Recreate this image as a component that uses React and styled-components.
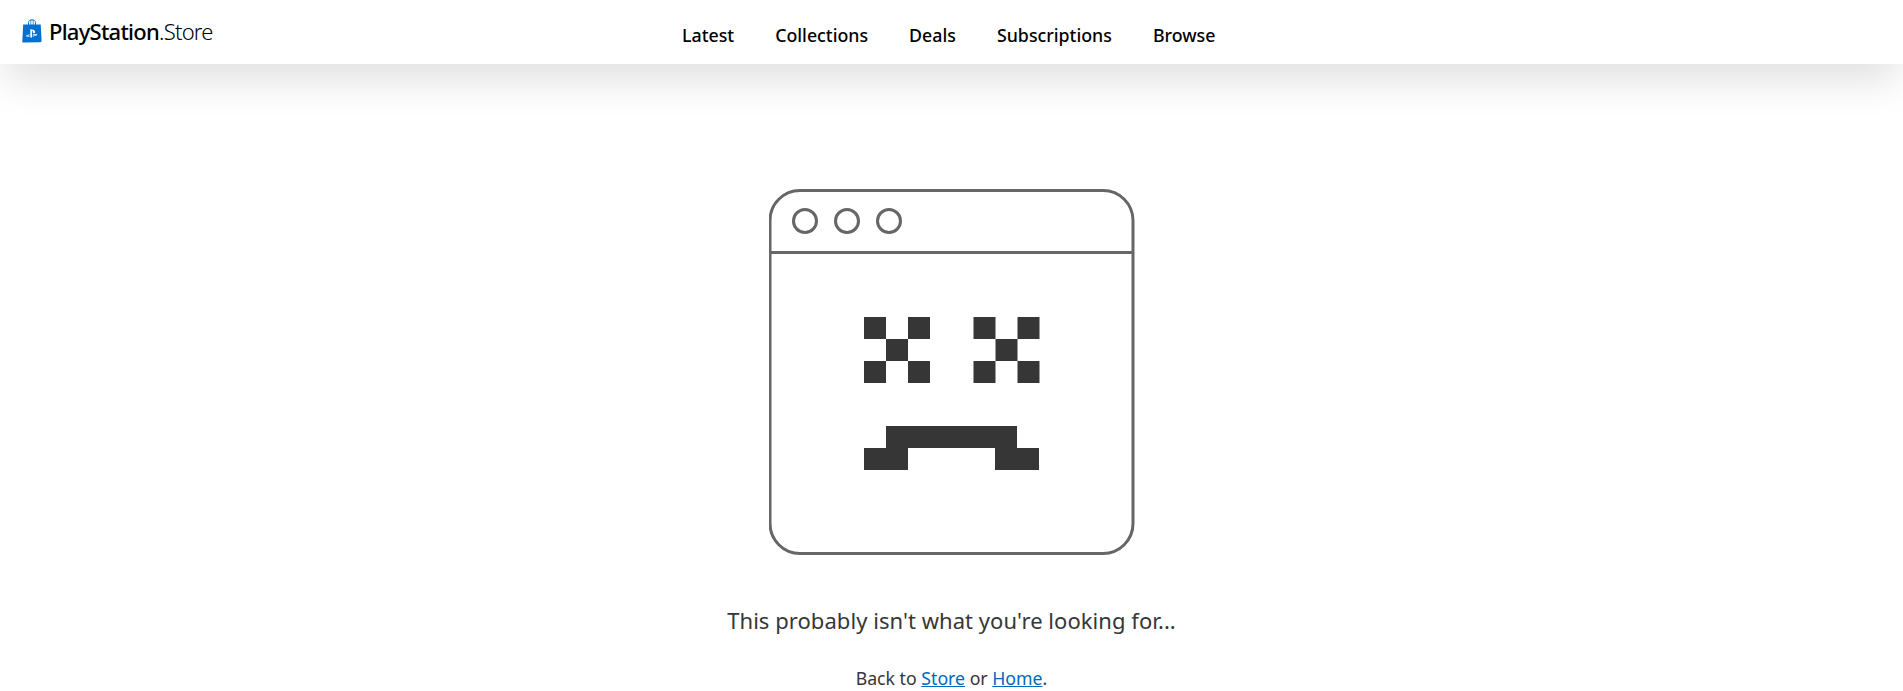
import React from "react";
import styled, { createGlobalStyle } from "styled-components";

const Global = createGlobalStyle`
  html, body { margin: 0; padding: 0; background: #fff; overflow: hidden; }
  body { font-family: "Noto Sans", "Open Sans", sans-serif; color: #363636; }
`;

const Page = styled.div`
  width: 1903px;
  height: 691px;
  overflow: hidden;
  display: flex;
  flex-direction: column;
`;

const Header = styled.header`
  height: 64px;
  flex: none;
  background: #fff;
  display: flex;
  align-items: center;
  padding: 0 0 0 22px;
  box-shadow: 0 20px 40px -5px rgba(0, 0, 0, 0.13);
`;

const Brand = styled.a`
  display: flex;
  align-items: center;
  gap: 7px;
  width: 460px;
  flex: none;
  color: #000;
  text-decoration: none;
  margin-top: -2px;
  margin-right: 200px;
`;

const BrandText = styled.span`
  font-family: "Noto Sans", sans-serif;
  font-size: 22px;
  line-height: 30px;
  letter-spacing: -0.75px;
  font-weight: 500;
  white-space: nowrap;
`;

const BrandLight = styled.span`
  font-weight: 300;
`;

const Nav = styled.nav`
  display: flex;
  gap: 41px;
  margin-top: 6px;
`;

const NavLink = styled.a`
  font-size: 17.8px;
  line-height: 24px;
  font-weight: 500;
  color: #000;
  text-decoration: none;
`;

const Main = styled.main`
  display: flex;
  flex-direction: column;
  align-items: center;
  padding-top: 125px;
`;

const Illustration = styled.svg`
  display: block;
  width: 366px;
  height: 366px;
`;

const Title = styled.h1`
  margin: 50px 0 0;
  font-size: 22px;
  line-height: 30px;
  font-weight: 400;
  letter-spacing: 0.05px;
  color: #363636;
`;

const Note = styled.p`
  margin: 31px 0 0;
  font-size: 17.7px;
  line-height: 24px;
  color: #363636;
`;

const TextLink = styled.a`
  color: #0068bd;
  text-decoration: underline;
`;

function BagIcon() {
  return (
    <svg width="20" height="24" viewBox="0 0 20 24" aria-hidden="true">
      <path d="M6.5 6V3.6C6.5 1.9 8 .8 10 .8s3.5 1.1 3.5 2.8V6" fill="none" stroke="#0070d1" strokeWidth="1" />
      <path d="M8.8 1v5M11.2 1v5" fill="none" stroke="#0070d1" strokeWidth=".7" />
      <path d="M1.2 5.5H18.7L19.6 21.8C19.6 22.7 19 23.2 18.2 23.3L1.6 23.6C.7 23.6.2 23 .3 22.2Z" fill="#0070d1" />
      <path d="M8.3 10.2V18.2L10 18.7V12C10 11.6 10.4 11.5 10.6 11.9C10.9 12.8 10.7 14.3 11.9 14.3C13.2 14.5 13.5 13 12.8 11.8C12.2 10.9 10.3 10.5 8.3 10.2ZM7.5 15.2L4.6 16.2C3.7 16.7 3.9 17.4 5 17.6C5.9 17.8 6.7 17.7 7.5 17.4V16.6L6 17C5.5 17.1 5.3 16.8 5.8 16.6L7.5 16ZM10.7 17.7L14.8 16.3C15.6 15.8 15.3 15.2 14.2 15C13 14.9 11.8 15.2 10.7 15.6V16.5L13.4 15.7C14 15.6 14.1 15.9 13.6 16.1L10.7 17Z" fill="#fff" />
    </svg>
  );
}

function ErrorWindow() {
  const ink = "#363636";
  const line = "#666";
  const eye = (x) => (
    <path
      fill={ink}
      d={`M${x} 128h22v22h22v-22h22v22h-22v22h22v22h-22v-22h-22v22h-22v-22h22v-22h-22z`}
    />
  );
  return (
    <Illustration viewBox="0 0 366 366" aria-hidden="true">
      <g transform="translate(-769 0)">
        <rect x="770" y="1.5" width="363" height="363" rx="30" fill="none" stroke={line} strokeWidth="3" />
        <path d="M770 63.5H1133" stroke={line} strokeWidth="3" />
        <circle cx="805" cy="32" r="11.5" fill="none" stroke={line} strokeWidth="3" />
        <circle cx="847" cy="32" r="11.5" fill="none" stroke={line} strokeWidth="3" />
        <circle cx="889" cy="32" r="11.5" fill="none" stroke={line} strokeWidth="3" />
        {eye(864)}
        {eye(973.5)}
        <path fill={ink} d="M886 237H1017V259H1039V281H995V259H908V281H864V259H886Z" />
      </g>
    </Illustration>
  );
}

export default function App() {
  return (
    <Page>
      <Global />
      <Header>
        <Brand href="#">
          <BagIcon />
          <BrandText>PlayStation<BrandLight>.Store</BrandLight></BrandText>
        </Brand>
        <Nav>
          {["Latest", "Collections", "Deals", "Subscriptions", "Browse"].map((t) => (
            <NavLink key={t} href="#">{t}</NavLink>
          ))}
        </Nav>
      </Header>
      <Main>
        <ErrorWindow />
        <Title>This probably isn't what you're looking for...</Title>
        <Note>
          Back to <TextLink href="#">Store</TextLink> or <TextLink href="#">Home</TextLink>.
        </Note>
      </Main>
    </Page>
  );
}
